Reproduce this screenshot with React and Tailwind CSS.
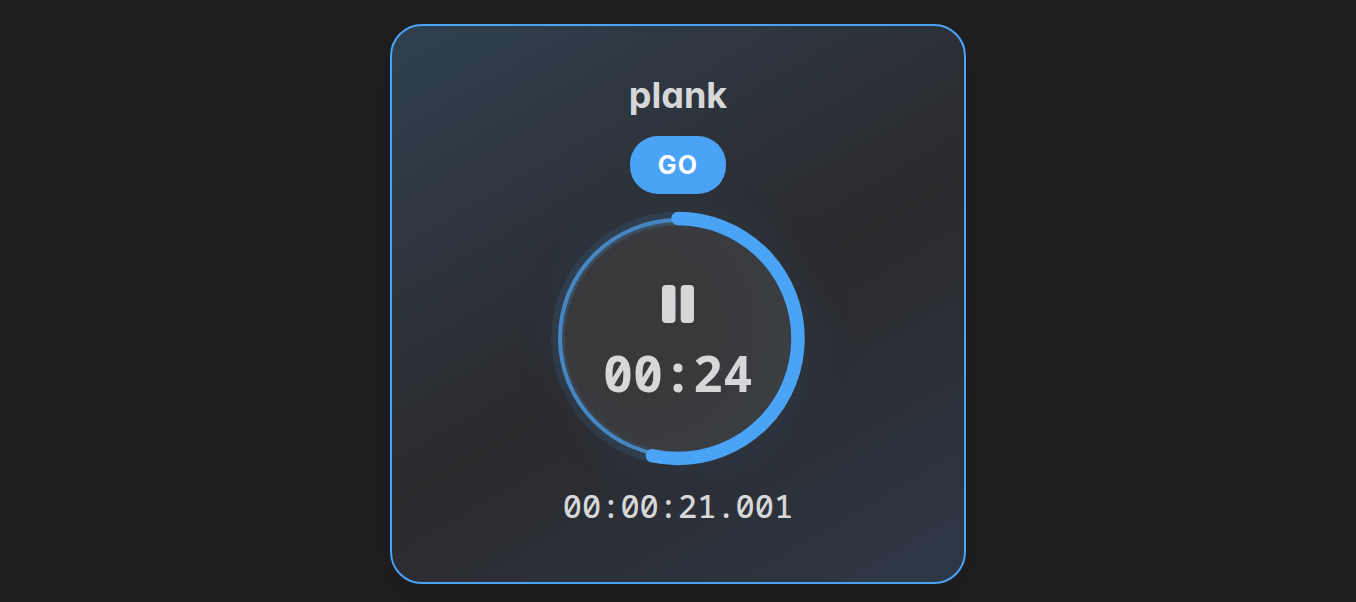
const RADIUS = 120;
const LENGTH = 2 * Math.PI * RADIUS;
const progress = 0.534;

function ProgressRing() {
  return (
    <svg
      viewBox="0 0 256 256"
      className="pointer-events-none absolute -inset-2 -rotate-90"
      fill="none"
      aria-hidden="true"
    >
      <circle cx="127.5" cy="128" r={RADIUS} stroke="#4aa3f5" strokeOpacity="0.1" strokeWidth="13.5" />
      <circle
        cx="127.5"
        cy="128"
        r={RADIUS}
        stroke="#4aa3f5"
        strokeWidth="13.5"
        strokeLinecap="round"
        strokeDasharray={`${LENGTH * progress} ${LENGTH}`}
      />
    </svg>
  );
}

function PauseIcon() {
  return (
    <svg viewBox="0 0 32 38" className="h-[38px] w-8" fill="currentColor" aria-hidden="true">
      <rect x="0" y="0" width="13.5" height="38" rx="4" />
      <rect x="18.7" y="0" width="13.3" height="38" rx="4" />
    </svg>
  );
}

export default function App() {
  return (
    <div className="min-h-screen bg-[#1f1f21] p-6 font-['Inter',sans-serif] text-[#d6d7d9]">
      <main className="mx-auto flex max-w-xl flex-col items-center rounded-[32px] border-2 border-[#4aa3f5] bg-[linear-gradient(150deg,#30404f_0%,#2b2a2d_54%,#2d3846_100%)] py-12 shadow-[0_16px_48px_rgba(0,0,0,0.12)]">
        <h1 className="text-4xl leading-[42px] font-bold [font-feature-settings:'cv11']">plank</h1>
        <span className="mt-5 rounded-[28px] bg-[#4aa3f5] px-7 py-[13px] text-[25px] leading-8 font-bold tracking-[0.05em] text-white">
          GO
        </span>
        <div className="relative mt-6 size-60 rounded-full shadow-[8px_0_56px_rgba(74,163,245,0.1)]">
          <button
            type="button"
            aria-label="Pause timer"
            className="flex size-full flex-col items-center justify-center gap-5 rounded-full border-4 border-[#4aa3f5]/70 bg-[radial-gradient(circle_at_35%_45%,#39393c_40%,#3b4147_100%)] bg-origin-border pt-3 shadow-[inset_0_2px_4px_rgba(74,163,245,0.2)]"
          >
            <PauseIcon />
            <span className="font-['Noto_Sans_Mono','DejaVu_Sans_Mono',monospace] text-[50px] leading-[60px] font-bold">00:24</span>
          </button>
          <ProgressRing />
        </div>
        <p className="mt-6 pb-1 font-['Noto_Sans_Mono','DejaVu_Sans_Mono',monospace] text-[32px] leading-[48px] font-medium">00:00:21.001</p>
      </main>
    </div>
  );
}
